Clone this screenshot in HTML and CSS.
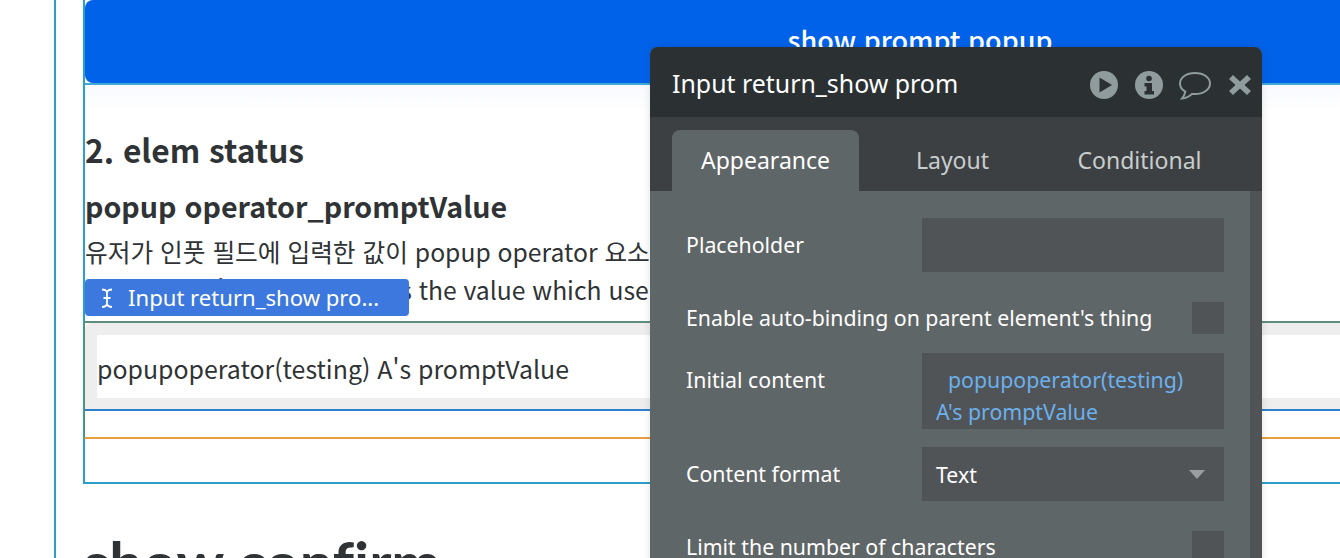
FILE: index.html
```html
<!DOCTYPE html>
<html lang="ko">
<head>
<meta charset="utf-8">
<title>Input return_show prompt popup</title>
<link rel="stylesheet" href="styles.css">
</head>
<body>
<div class="canvas">
  <div class="outer">
    <div class="group">
      <div class="btn"><span class="btn-label">show prompt popup</span></div>
      <div class="section">
        <h2 class="h2">2. elem status</h2>
        <h3 class="h3">popup operator_promptValue</h3>
        <p class="para">유저가 인풋 필드에 입력한 값이 popup operator 요소의 promptValue 값이 됩니다.</p>
        <p class="para second">the popups' prompt value is the value which user typed in the input field.</p>
        <div class="input-group">
          <div class="input-wrap">
            <div class="input-box">popupoperator(testing) A's promptValue</div>
          </div>
          <div class="spacer"></div>
        </div>
      </div>
    </div>
    <h1 class="h1">show confirm</h1>
  </div>

  <div class="tag">
    <svg class="tag-icon" viewBox="0 0 14 22" width="14" height="22"><path d="M2 2.500c2.500 0 4 .8 5 2 1-1.200 2.500-2 5-2M7 4.500v13M3.500 11h7M2 20c2.500 0 4-.8 5-2.500 1 1.700 2.500 2.500 5 2.500" fill="none" stroke="#fff" stroke-width="1.800"/></svg>
    <span class="tag-text">Input return_show pro...</span>
  </div>

  <aside class="panel">
    <header class="panel-head">
      <div class="panel-title">Input return_show prompt popup</div>
      <div class="panel-icons">
        <svg viewBox="0 0 28 28" width="28" height="28"><circle cx="14" cy="14" r="14" fill="#8f9b9d"/><path d="M9.500 6.500 22 14 9.500 21.500z" fill="#2b3133"/></svg>
        <svg viewBox="0 0 28 28" width="28" height="28"><circle cx="14" cy="14" r="14" fill="#8f9b9d"/><circle cx="14" cy="7.500" r="2.800" fill="#2b3133"/><path d="M9.500 12h7.500v8h2v3.500H9.500V20h2v-4.500h-2z" fill="#2b3133"/></svg>
        <svg class="bubble" viewBox="0 0 34 30" width="34" height="30"><path d="M17 2C8.500 2 2 6.500 2 12.500c0 3.300 2 6.200 5.300 8.100-.4 2.500-1.700 5-3.300 7 3.700-.4 7.500-2.300 10-4.700 1 .1 2 .2 3 .2 8.500 0 15-4.600 15-10.600S25.500 2 17 2z" fill="none" stroke="#8f9b9d" stroke-width="2"/></svg>
        <svg viewBox="0 0 24 24" width="24" height="24"><path d="M5 2 12 8.500 19 2 23 6 16.500 12 23 18 19 22 12 15.500 5 22 1 18 7.500 12 1 6z" fill="#8f9b9d"/></svg>
      </div>
    </header>
    <nav class="tabs">
      <div class="tab active">Appearance</div>
      <div class="tab">Layout</div>
      <div class="tab">Conditional</div>
    </nav>
    <div class="panel-body">
      <div class="form">
        <div class="row r-placeholder">
          <label class="lab">Placeholder</label>
          <div class="field h54"></div>
        </div>
        <div class="row r-bind">
          <label class="lab">Enable auto-binding on parent element's thing</label>
          <div class="check"></div>
        </div>
        <div class="row r-initial">
          <label class="lab top">Initial content</label>
          <div class="field multi"><span class="dyn indent">popupoperator(testing)</span> <span class="dyn">A's promptValue</span></div>
        </div>
        <div class="row r-format">
          <label class="lab">Content format</label>
          <div class="field h54 select"><span>Text</span><i class="caret"></i></div>
        </div>
        <div class="row r-limit">
          <label class="lab">Limit the number of characters</label>
          <div class="check"></div>
        </div>
      </div>
      <div class="scrollbar"></div>
    </div>
  </aside>
</div>
</body>
</html>
```
FILE: styles.css
```css
* { box-sizing: border-box; }
html, body { margin: 0; padding: 0; background: #fff; }
.canvas {
  width: 1340px; height: 558px; overflow: hidden; position: relative;
  font-family: "Noto Sans CJK KR", "Noto Sans", sans-serif; color: #2f3335;
}
.outer {
  margin-left: 54px; width: 1800px; height: 700px;
  border-left: 2px solid #2b9fca; padding-left: 27px;
}
.group {
  width: 1700px; height: 484px;
  border-left: 2px solid #2b9fca; border-bottom: 2px solid #2b9fca;
}
.btn {
  width: 1670px; height: 83px; background: #0062e9; border-radius: 8px;
  color: #fff; font-size: 27px; font-weight: 500; text-align: center; padding-top: 21px; line-height: 38px;
}
.section {
  border-top: 2px solid #3fa9d4; height: 399px;
  background: linear-gradient(#f9fafe, #fff 26px);
}
.h2 { margin: 0; padding-top: 41px; font-size: 31.700px; line-height: 46px; font-weight: 700; }
.h3 { margin: 0; padding-top: 13px; font-size: 28.650px; line-height: 41px; font-weight: 700; }
.para { margin: 0; font-size: 24.700px; line-height: 38px; white-space: nowrap; }
.para:first-of-type { padding-top: 6px; }
.second { height: 38px; }
.input-group {
  margin-top: 13px; margin-left: -1px; height: 118px; width: 1700px;
  border-left: 1px solid #5d8a5f; border-top: 2px solid #5f8f7c; border-bottom: 2px solid #e6a040;
}
.input-wrap {
  height: 88px; background: #eeeeee; padding: 12px 12px 11px 12px;
  border-radius: 6px 0 0 0; border-bottom: 2px solid #2f7fd0;
}
.input-box {
  background: #fff; height: 63px; font-size: 24.900px; line-height: 66px;
}
.h1 { margin: 0; padding-top: 38px; font-family: Lato, sans-serif; font-size: 59.500px; line-height: 80px; font-weight: 700; font-variant-ligatures: none; }

.tag {
  position: absolute; left: 85px; top: 279px; width: 324px; height: 37px;
  background: #3d78de; border-radius: 4px; color: #fff; font-size: 22.100px; line-height: 36px;
  display: flex; align-items: center; gap: 14px; padding-left: 15px;
  font-family: "Noto Sans", sans-serif;
}
.tag-icon { flex: none; }
.tag-text { padding-bottom: 1px; }

.panel {
  position: absolute; left: 650px; top: 47px; width: 612px; height: 540px;
  border-radius: 8px 8px 0 0; overflow: hidden; background: #5f6667;
  font-family: "Noto Sans", sans-serif; color: #fff;
  box-shadow: 0 0 8px rgba(0,0,0,.12);
}
.panel-head {
  height: 70px; background: #2b3133; display: flex; align-items: center; padding-left: 22px;
}
.panel-title {
  width: 285px; white-space: nowrap; overflow: hidden; font-size: 24.900px; color: #fff; padding-top: 1px;
}
.panel-icons {
  margin-left: auto; display: flex; align-items: center; gap: 17px; padding: 5px 10px 0 0;
}
.bubble { margin: 3px -1px 0 -2px; }
.tabs {
  height: 74px; background: #3c4042; display: flex; padding: 13px 0 0 22px;
}
.tab {
  width: 187px; height: 61px; font-size: 23px; line-height: 60px; text-align: center; color: #c9cdce;
  border-radius: 8px 8px 0 0;
}
.tab.active { background: #5f6667; color: #fff; }
.panel-body { display: flex; height: 396px; }
.form { flex: 1; padding: 27px 26px 0 36px; }
.scrollbar { width: 12px; background: #505456; }
.row { display: flex; align-items: center; justify-content: space-between; font-size: 21.300px; }
.lab { white-space: nowrap; padding-bottom: 2px; }
.field { width: 302px; background: #505456; }
.h54 { height: 54px; }
.check { width: 32px; height: 32px; background: #505456; }
.r-bind { margin-top: 30px; }
.r-initial { margin-top: 19px; align-items: flex-start; }
.r-format { margin-top: 18px; }
.r-limit { margin-top: 30px; }
.top { padding-top: 12px; }
.multi { height: 76px; padding: 11px 14px 0; line-height: 32px; color: #6cb0ec; }
.dyn { color: #6cb0ec; }
.indent { margin-left: 12px; }
.select { display: flex; align-items: center; justify-content: space-between; padding: 0 19px 0 14px; }
.caret { width: 0; height: 0; border-left: 8px solid transparent; border-right: 8px solid transparent; border-top: 9px solid #9a9ea0; }
```
